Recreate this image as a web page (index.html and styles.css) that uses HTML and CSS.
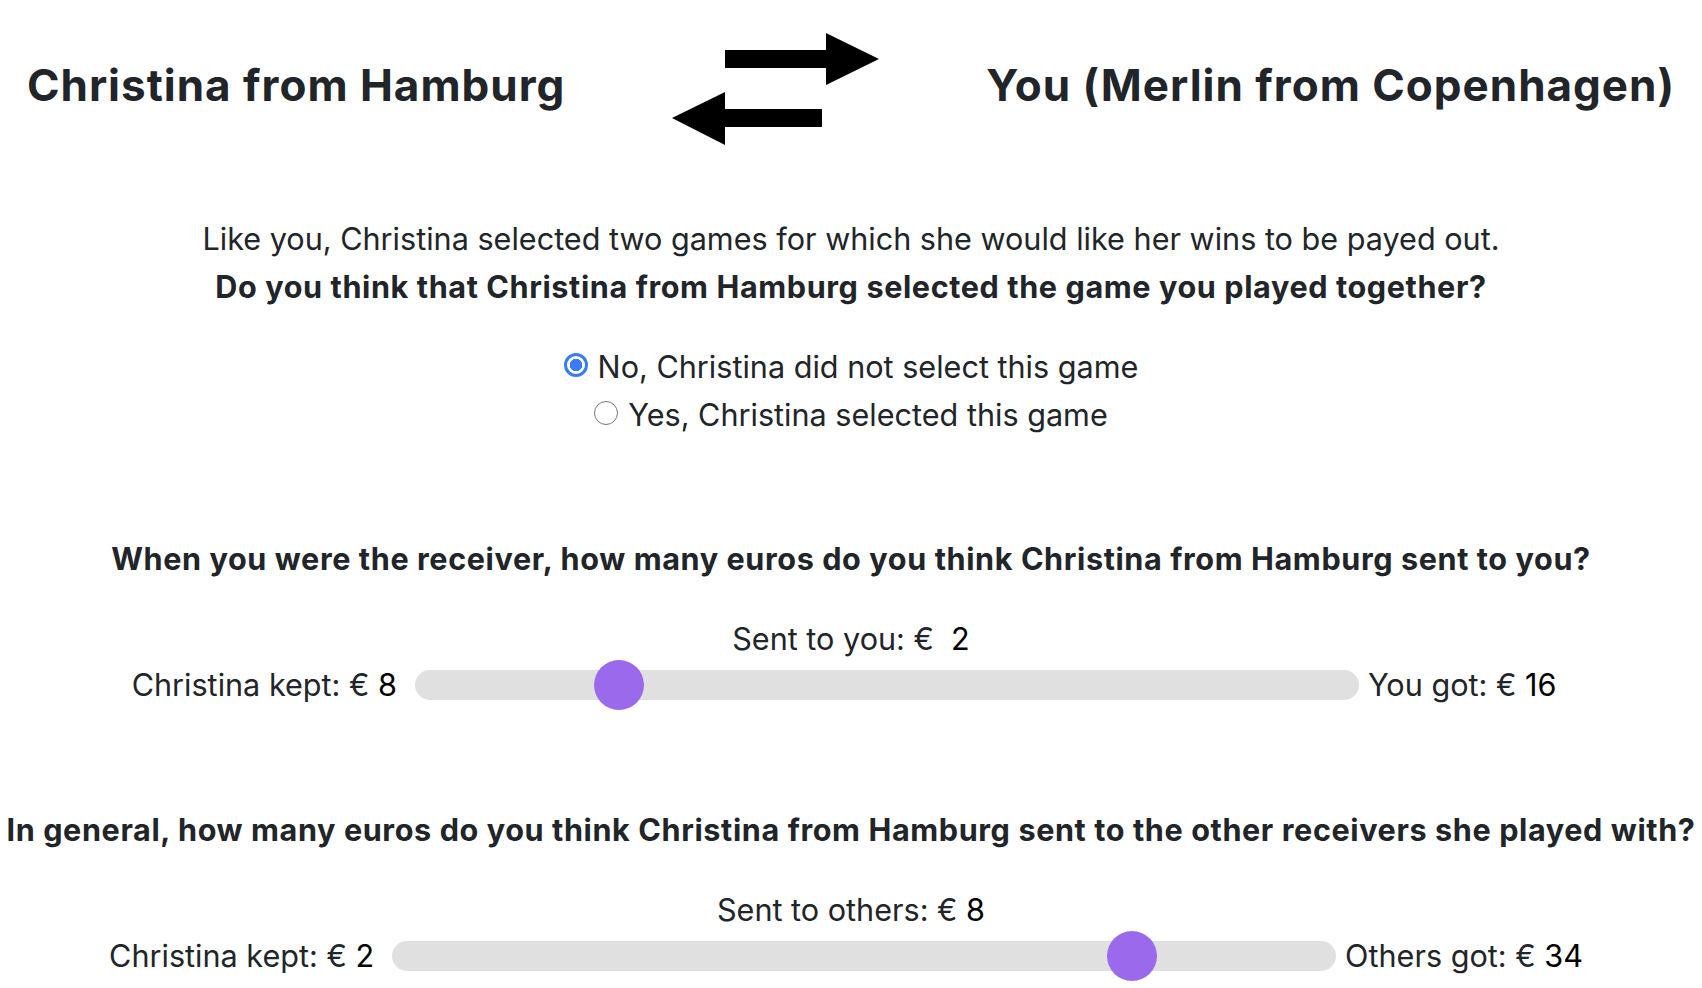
FILE: index.html
```html
<!DOCTYPE html>
<html lang="en">
<head>
    <meta charset="UTF-8">
    <meta name="viewport" content="width=device-width, initial-scale=1.0">
    <title>Beliefs</title>
    <link rel="stylesheet" href="styles.css">
</head>
<body>

    <div class="players">
        <h1>Christina from Hamburg</h1>
        <svg class="swap" width="207" height="112" viewBox="0 0 207 112">
            <rect x="53" y="17" width="102" height="18" fill="#000"/>
            <polygon points="154,0 207,26 154,52" fill="#000"/>
            <polygon points="0,85 53,59 53,112" fill="#000"/>
            <rect x="52" y="76" width="98" height="18" fill="#000"/>
        </svg>
        <h1>You (Merlin from Copenhagen)</h1>
    </div>

    <div class="intro">
        <p>Like you, Christina selected two games for which she would like her wins to be payed out.</p>
        <p class="question">Do you think that Christina from Hamburg selected the game you played together?</p>
    </div>

    <div class="choices">
        <label><input type="radio" name="selected" value="no" checked> No, Christina did not select this game</label>
        <label><input type="radio" name="selected" value="yes"> Yes, Christina selected this game</label>
    </div>

    <div class="guess">
        <p class="question">When you were the receiver, how many euros do you think Christina from Hamburg sent to you?</p>
        <p class="sent">Sent to you: €&nbsp; <span class="num">2</span></p>
        <div class="slider-row">
            <span class="side">Christina kept: € <span class="num">8</span></span>
            <input type="range" min="0" max="10" value="2">
            <span class="side right">You got: € <span class="num">16</span></span>
        </div>
    </div>

    <div class="guess">
        <p class="question">In general, how many euros do you think Christina from Hamburg sent to the other receivers she played with?</p>
        <p class="sent">Sent to others: € <span class="num">8</span></p>
        <div class="slider-row second">
            <span class="side">Christina kept: € <span class="num">2</span></span>
            <input type="range" min="0" max="10" value="8">
            <span class="side right">Others got: € <span class="num">34</span></span>
        </div>
    </div>

</body>
</html>
```

FILE: styles.css
```css
body {
    font-family: Inter, "Noto Sans", sans-serif;
    font-size: 30.6px;
    line-height: 48px;
    color: #212529;
    background-color: white;
    margin: 0;
    padding: 0;
}

p {
    margin: 0;
    text-align: center;
}

.players {
    display: flex;
    justify-content: center;
    align-items: center;
    gap: 107px;
    margin-top: 33px;
}

.players h1 {
    font-size: 44px;
    font-weight: 700;
    letter-spacing: 1px;
    line-height: 52px;
    white-space: nowrap;
    margin: 0 0 8px 0;
}

.swap {
    display: block;
}

.intro {
    margin-top: 70px;
}

.question {
    font-weight: 700;
    letter-spacing: 0.6px;
    white-space: nowrap;
}

.choices {
    margin-top: 32px;
    display: flex;
    flex-direction: column;
    align-items: center;
}

.choices label {
    display: flex;
    align-items: center;
}

.choices input {
    -webkit-appearance: none;
    appearance: none;
    width: 24px;
    height: 24px;
    margin: 0 10px 0 0;
    border: 1.5px solid #767676;
    border-radius: 50%;
    background: white;
    position: relative;
    top: -2px;
}

.choices input:checked {
    border: 3px solid #3b7cf5;
    background: radial-gradient(circle, #3b7cf5 0 6px, white 6.5px);
}

.guess {
    margin-top: 96px;
}

.sent {
    margin-top: 32px;
}

.num {
    color: #000;
}

.slider-row {
    display: flex;
    justify-content: center;
    align-items: center;
    margin-top: -3px;
    height: 50px;
    padding-right: 14px;
}

.side {
    white-space: nowrap;
}

.slider-row input {
    -webkit-appearance: none;
    appearance: none;
    width: 944px;
    height: 50px;
    margin: 0 9px 0 18px;
    background: transparent;
}

.slider-row input::-webkit-slider-runnable-track {
    height: 30px;
    border-radius: 15px;
    background: #e0e0e0;
}

.slider-row input::-webkit-slider-thumb {
    -webkit-appearance: none;
    width: 50px;
    height: 50px;
    margin-top: -10px;
    border-radius: 50%;
    background: #9b69ec;
    border: none;
}

.second {
    padding-right: 10px;
}
```
